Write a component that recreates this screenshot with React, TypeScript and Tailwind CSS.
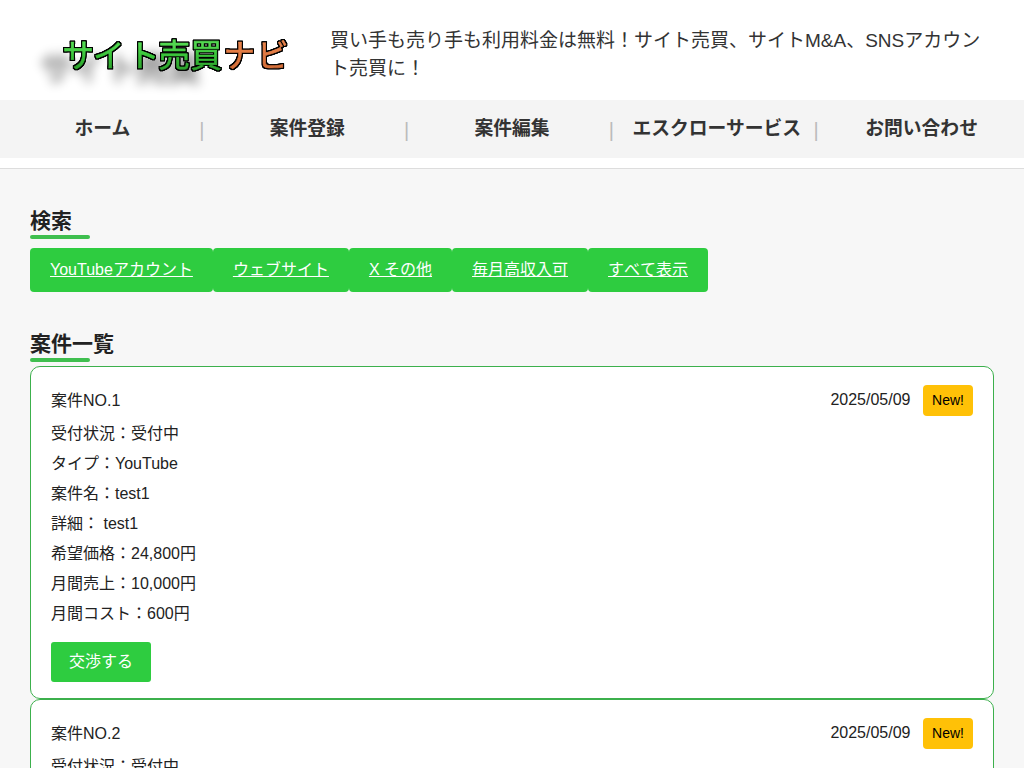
import React from 'react';

interface Deal {
  no: number;
  date: string;
  status: string;
  type: string;
  name: string;
  detail: string;
  price: string;
  sales: string;
  cost: string;
}

const NAV_ITEMS = ['ホーム', '案件登録', '案件編集', 'エスクローサービス', 'お問い合わせ'];

const FILTERS = ['YouTubeアカウント', 'ウェブサイト', 'X その他', '毎月高収入可', 'すべて表示'];

const DEALS: Deal[] = [1, 2].map((no) => ({
  no,
  date: '2025/05/09',
  status: '受付中',
  type: 'YouTube',
  name: `test${no}`,
  detail: `test${no}`,
  price: '24,800円',
  sales: '10,000円',
  cost: '600円',
}));

const Logo: React.FC = () => (
  <svg width="310" height="100" viewBox="0 0 310 100" className="block shrink-0" fontSize="31.5">
    <defs>
      <linearGradient id="green" x1="0" y1="0" x2="0" y2="1">
        <stop offset="0.2" stopColor="#52d850" />
        <stop offset="0.5" stopColor="#38c238" />
        <stop offset="1" stopColor="#289428" />
      </linearGradient>
      <linearGradient id="orange" x1="0" y1="0" x2="0" y2="1">
        <stop offset="0.2" stopColor="#e8824a" />
        <stop offset="1" stopColor="#cf6833" />
      </linearGradient>
      {/* 黒フチ */}
      <filter id="outline" filterUnits="userSpaceOnUse" x="0" y="0" width="310" height="100" colorInterpolationFilters="sRGB">
        <feMorphology in="SourceAlpha" operator="dilate" radius="1" result="edge" />
        <feGaussianBlur in="edge" stdDeviation="0.6" result="soft" />
        <feMerge>
          <feMergeNode in="soft" />
          <feMergeNode in="soft" />
          <feMergeNode in="edge" />
          <feMergeNode in="SourceGraphic" />
        </feMerge>
      </filter>
      {/* 黒フチ + 左下の影 */}
      <filter id="outlineShadow" filterUnits="userSpaceOnUse" x="0" y="0" width="310" height="100" colorInterpolationFilters="sRGB">
        <feMorphology in="SourceAlpha" operator="dilate" radius="1" result="edge" />
        <feGaussianBlur in="edge" stdDeviation="0.6" result="soft" />
        <feOffset in="edge" dx="-22" dy="13" result="moved" />
        <feGaussianBlur in="moved" stdDeviation="5.5" result="blurred" />
        <feComponentTransfer in="blurred" result="shadow">
          <feFuncA type="linear" slope="0.38" />
        </feComponentTransfer>
        <feMerge>
          <feMergeNode in="shadow" />
          <feMergeNode in="soft" />
          <feMergeNode in="soft" />
          <feMergeNode in="edge" />
          <feMergeNode in="SourceGraphic" />
        </feMerge>
      </filter>
    </defs>
    <g strokeWidth="0.6" strokeLinejoin="round" strokeLinecap="round">
      <text x="62.5 93 128 158.5 190.5" y="67" fill="url(#green)" stroke="url(#green)" filter="url(#outlineShadow)">
        サイト売買
      </text>
      <text x="223.5 257" y="67" fill="url(#orange)" stroke="url(#orange)" filter="url(#outline)">
        ナビ
      </text>
    </g>
  </svg>
);

const SectionTitle: React.FC<{ children: React.ReactNode }> = ({ children }) => (
  <div>
    <h2 className="h-[30px] text-[21px] leading-[31px] font-bold">{children}</h2>
    <div className="h-1 w-[60px] rounded-full bg-[#3fbf4f]" />
  </div>
);

const DealCard: React.FC<{ deal: Deal }> = ({ deal }) => {
  const rows = [
    `受付状況：${deal.status}`,
    `タイプ：${deal.type}`,
    `案件名：${deal.name}`,
    `詳細： ${deal.detail}`,
    `希望価格：${deal.price}`,
    `月間売上：${deal.sales}`,
    `月間コスト：${deal.cost}`,
  ];

  return (
    <article className="h-[333px] rounded-[10px] border border-[#3cb04c] bg-white px-5 pt-[18px]">
      <div className="flex h-[33px] items-start justify-between">
        <p className="leading-[32px]">案件NO.{deal.no}</p>
        <div className="flex items-center">
          <span className="mr-[12.5px] -mt-0.5 leading-[28px]">{deal.date}</span>
          <span className="h-[31px] w-[50px] rounded bg-[#ffc107] text-center text-[14px] leading-[31px] text-black">
            New!
          </span>
        </div>
      </div>
      {rows.map((row) => (
        <p key={row} className="h-[30px] leading-[32px]">{row}</p>
      ))}
      <button className="mt-[14px] block h-10 w-[100px] rounded-[3px] bg-[#2ecc40] leading-10 text-white">
        交渉する
      </button>
    </article>
  );
};

const App: React.FC = () => {
  return (
    <div className="h-screen overflow-hidden bg-[#f7f7f7] font-['Liberation_Sans','Noto_Sans_CJK_JP',sans-serif] text-base text-[#222]">
      {/* ヘッダー */}
      <header className="h-[169px] border-b border-[#ddd] bg-white">
        <div className="flex h-[100px]">
          <Logo />
          <p className="w-[714px] pt-[27px] pr-[30px] pl-5 text-[19px] leading-[28px] text-[#333] [font-kerning:none]">
            買い手も売り手も利用料金は無料！サイト売買、サイトM&amp;A、SNSアカウント売買に！
          </p>
        </div>
        <nav className="h-[57.5px] bg-[#f4f4f4]">
          <ul className="grid grid-cols-5">
            {NAV_ITEMS.map((item, i) => (
              <li key={item} className="flex h-[57px] justify-center">
                <a href="#" className="w-full text-center text-[18.8px] leading-[57px] font-bold whitespace-nowrap text-[#333]">
                  {item}
                </a>
                {i < NAV_ITEMS.length - 1 && (
                  <span className="-ml-1 w-1 shrink-0 pt-4 text-center">
                    <span className="-ml-0.5 block text-[20px] leading-[28px] text-[#bbb]">|</span>
                  </span>
                )}
              </li>
            ))}
          </ul>
        </nav>
      </header>

      <main className="px-[30px] pt-9">
        {/* 検索 */}
        <section>
          <SectionTitle>検索</SectionTitle>
          <div className="mt-[9px] flex">
            {FILTERS.map((label) => (
              <a
                key={label}
                href="#"
                className="h-11 rounded bg-[#2ecc40] px-5 leading-[43px] whitespace-nowrap text-white underline last:[font-kerning:none]"
              >
                {label}
              </a>
            ))}
          </div>
        </section>

        {/* 案件一覧 */}
        <section className="mt-9">
          <SectionTitle>案件一覧</SectionTitle>
          <div className="mt-1">
            {DEALS.map((deal) => (
              <DealCard key={deal.no} deal={deal} />
            ))}
          </div>
        </section>
      </main>
    </div>
  );
};

export default App;
